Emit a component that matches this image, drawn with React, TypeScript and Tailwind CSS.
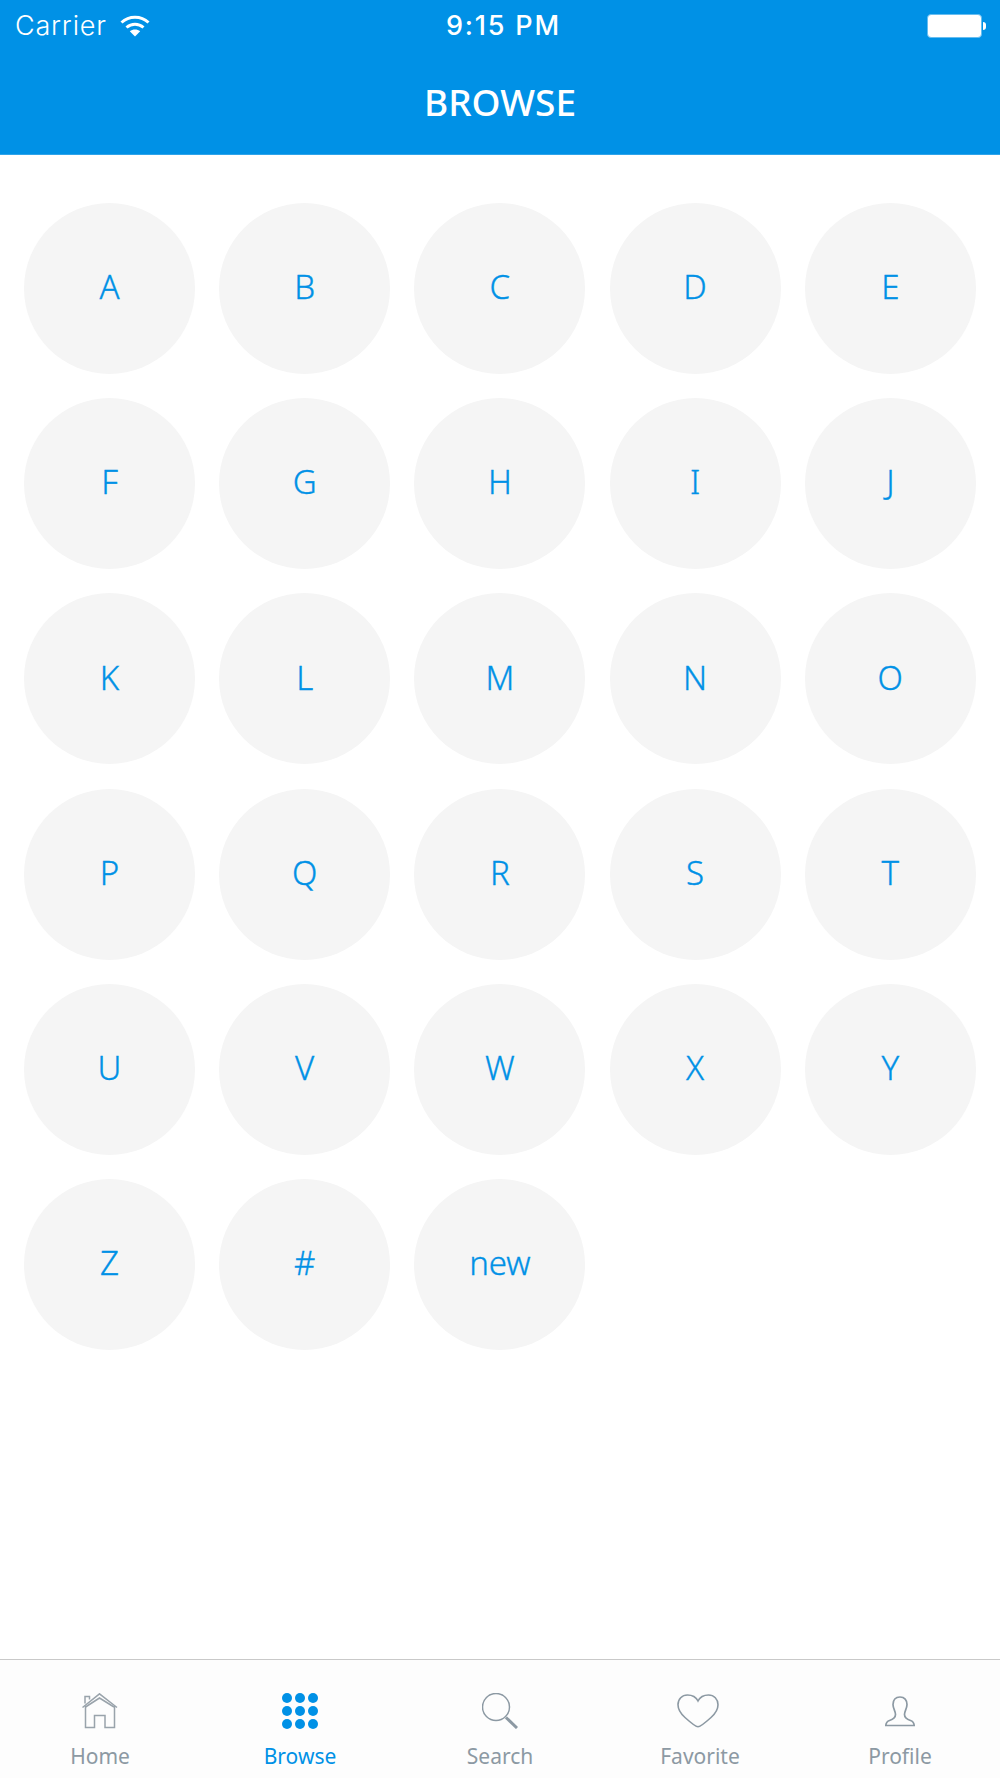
import { ReactNode } from "react";

const LETTERS = "ABCDEFGHIJKLMNOPQRSTUVWXYZ#".split("").concat("new");

function WifiIcon() {
  return (
    <svg width="30" height="22" viewBox="0 0 30 22" fill="none">
      <path d="M1.5 7.5C9 0.5 21 0.5 28.500 7.500" stroke="#fff" strokeWidth="3" />
      <path d="M6.500 12.500C11.500 8 18.500 8 23.500 12.500" stroke="#fff" strokeWidth="3" />
      <path d="M15 21.500L9.800 16.300C12.800 13.900 17.200 13.900 20.200 16.300Z" fill="#fff" />
    </svg>
  );
}

function HomeIcon() {
  return (
    <svg width="36" height="36" viewBox="0 0 36 36" fill="none" stroke="#99a3ab" strokeWidth="1.500">
      <path d="M0.500 14.500L17.500 0.800L35 14.500" />
      <path d="M3.500 14L17.500 5L32 14" />
      <path d="M3 10.500V3.500H7.500V6.500" />
      <path d="M3.500 13V34.500H12.500V22.500H23V34.500H32.500V13" />
    </svg>
  );
}

function BrowseIcon() {
  const pos = [[5, 5], [18, 5], [31, 5], [5, 18], [18, 18], [31, 18], [5, 31], [18, 31], [31, 31]];
  return (
    <svg width="36" height="36" viewBox="0 0 36 36" fill="#0091e6">
      {pos.map(([cx, cy]) => (
        <circle key={`${cx}-${cy}`} cx={cx} cy={cy} r="5" />
      ))}
    </svg>
  );
}

function SearchIcon() {
  return (
    <svg width="36" height="36" viewBox="0 0 36 36" fill="none" stroke="#8c99a3">
      <circle cx="14" cy="14" r="13.500" strokeWidth="1.500" />
      <path d="M24 24.500L35 35" strokeWidth="3" />
    </svg>
  );
}

function HeartIcon() {
  return (
    <svg width="42" height="34" viewBox="0 0 42 34" fill="none" stroke="#8c99a3" strokeWidth="1.600" className="mr-[4px]">
      <path d="M21 32.800C19.500 32.800 13 28 8 23.500C3.500 19.500 1 15.500 1 10.800C1 5 5 1 10.500 1C15 1 19 3 21 7C23 3 27 1 31.500 1C37 1 41 5 41 10.800C41 15.500 38.500 19.500 34 23.500C29 28 22.500 32.800 21 32.800Z" />
    </svg>
  );
}

function ProfileIcon() {
  return (
    <svg width="30" height="31" viewBox="0 0 30 31" fill="none" stroke="#8c99a3" strokeWidth="1.700">
      <path d="M15 1C10.500 1 8 4 8 8.500C8 12.500 10.500 15 10.500 18.500C10.500 22 7.500 23.500 4.500 24.500C2 25.300 1 27 0.800 29.500H29.200C29 27 28 25.300 25.500 24.500C22.500 23.500 19.500 22 19.500 18.500C19.500 15 22 12.500 22 8.500C22 4 19.500 1 15 1Z" />
    </svg>
  );
}

function TabItem({ label, active, children }: { label: string; active?: boolean; children: ReactNode }) {
  return (
    <div className="flex flex-col items-center">
      <div className="h-[36px] flex items-center justify-center">{children}</div>
      <span className={`mt-[12px] text-[21px] leading-[30px] ${active ? "text-[#0091e6]" : "text-[#8c99a3]"}`}>{label}</span>
    </div>
  );
}

export default function App() {
  return (
    <div className="w-[1000px] h-[1778px] flex flex-col bg-white font-['Noto_Sans',sans-serif]">
      {/* Header */}
      <header className="h-[155px] bg-[#0091e6] border-b border-[#2fa4ea] text-white">
        <div className="h-[50px] pl-[15px] pr-[14px] pt-[2px] flex items-center justify-between font-['Inter',sans-serif] text-[27px] leading-[38px]">
          <div className="w-[300px] flex items-center gap-[13px]">
            <span className="font-light tracking-[0.8px]">Carrier</span>
            <WifiIcon />
          </div>
          <span className="ml-[6px] font-medium tracking-[1.800px]">9:15 PM</span>
          <div className="w-[300px] flex justify-end items-center">
            <div className="w-[55px] h-[24px] rounded-[4px] border-[1.500px] border-[#66bdf0] bg-white" />
            <div className="ml-[1px] w-[3px] h-[8px] rounded-r-full bg-white" />
          </div>
        </div>
        <h1 className="mt-[26px] text-center text-[37px] leading-[52px] font-medium">BROWSE</h1>
      </header>

      {/* Letters */}
      <main className="flex-1 pt-[48px] px-[24px]">
        <div className="grid grid-cols-5 gap-x-[24px] gap-y-[24.200px]">
          {LETTERS.map((l) => (
            <div
              key={l}
              className="w-[171px] h-[171px] rounded-full bg-[#f5f5f5] flex items-center justify-center pb-[3px] text-[#0091e6] text-[33px] font-light [-webkit-text-stroke:0.35px_#0091e6]"
            >
              {l}
            </div>
          ))}
        </div>
      </main>

      {/* Tab bar */}
      <nav className="h-[119px] border-t border-[#c9c9c9] bg-[#fdfdfd] grid grid-cols-5 pt-[33px]">
        <TabItem label="Home"><HomeIcon /></TabItem>
        <TabItem label="Browse" active><BrowseIcon /></TabItem>
        <TabItem label="Search"><SearchIcon /></TabItem>
        <TabItem label="Favorite"><HeartIcon /></TabItem>
        <TabItem label="Profile"><ProfileIcon /></TabItem>
      </nav>
    </div>
  );
}
